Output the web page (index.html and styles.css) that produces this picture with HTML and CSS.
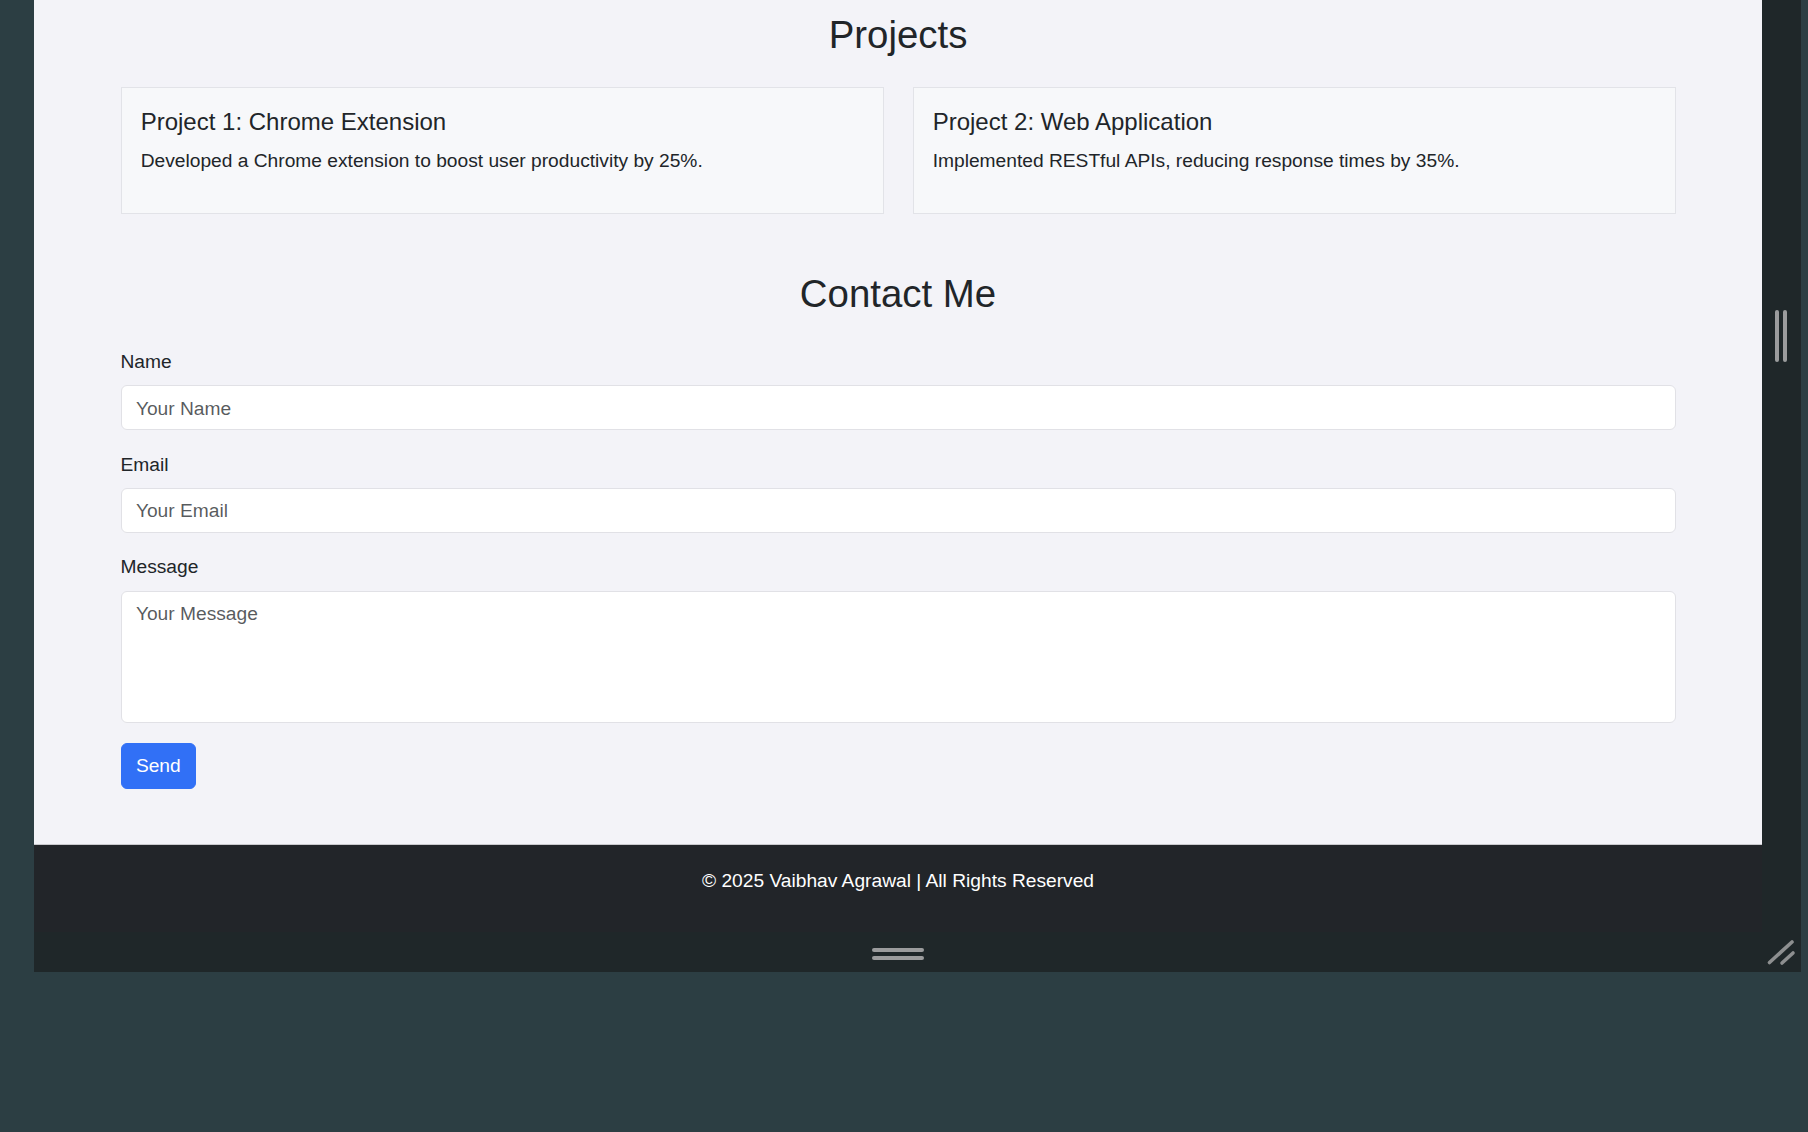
FILE: index.html
```html
<!DOCTYPE html>
<html lang="en">
<head>
<meta charset="utf-8">
<title>Vaibhav Agrawal</title>
<link rel="stylesheet" href="styles.css">
</head>
<body>
<div class="desk">
  <div class="window">
    <div class="viewport">
      <main class="panel">
        <section class="section projects">
          <h2 class="section-title title-projects">Projects</h2>
          <div class="cards">
            <div class="card">
              <h5 class="card-title">Project 1: Chrome Extension</h5>
              <p class="card-text">Developed a Chrome extension to boost user productivity by 25%.</p>
            </div>
            <div class="card">
              <h5 class="card-title">Project 2: Web Application</h5>
              <p class="card-text">Implemented RESTful APIs, reducing response times by 35%.</p>
            </div>
          </div>
        </section>
        <section class="section contact">
          <h2 class="section-title title-contact">Contact Me</h2>
          <form class="form">
            <div class="field">
              <label class="form-label" for="name">Name</label>
              <input class="form-control" id="name" type="text" placeholder="Your Name">
            </div>
            <div class="field">
              <label class="form-label" for="email">Email</label>
              <input class="form-control" id="email" type="email" placeholder="Your Email">
            </div>
            <div class="field">
              <label class="form-label" for="message">Message</label>
              <textarea class="form-control textarea" id="message" rows="4" placeholder="Your Message"></textarea>
            </div>
            <button type="button" class="btn">Send</button>
          </form>
        </section>
      </main>
      <footer class="footer">
        <p class="footer-text">© 2025 Vaibhav Agrawal | All Rights Reserved</p>
      </footer>
    </div>
    <div class="side-bar">
      <div class="v-grip"><span></span><span></span></div>
    </div>
    <div class="bottom-bar">
      <div class="h-grip"><span></span><span></span></div>
    </div>
    <div class="corner">
      <svg width="39" height="40" viewBox="0 0 39 40" aria-hidden="true">
        <line x1="7.5" y1="30.5" x2="30" y2="10" stroke="#8d8f90" stroke-width="3.6" stroke-linecap="round"/>
        <line x1="20" y1="31" x2="31" y2="21" stroke="#8d8f90" stroke-width="3.6" stroke-linecap="round"/>
      </svg>
    </div>
  </div>
</div>
</body>
</html>
```

FILE: styles.css
```css
* {
  box-sizing: border-box;
}

html, body {
  margin: 0;
  padding: 0;
}

body {
  background: #2c3e43;
  font-family: "Liberation Sans", Arial, Helvetica, sans-serif;
  color: #212529;
  width: 1808px;
  height: 1132px;
  overflow: hidden;
}

.desk {
  padding-left: 34px;
}

.window {
  width: 1767px;
  display: grid;
  grid-template-columns: 1728px 39px;
  grid-template-rows: 932px 40px;
  background: #1f2729;
}

.viewport {
  overflow: hidden;
  display: flex;
  flex-direction: column;
}

.panel {
  background: #f3f3f8;
  padding: 12px 86.5px 0;
  height: 845px;
  border-bottom: 1px solid #c9c9cd;
}

.section-title {
  margin: 0;
  font-size: 38.4px;
  line-height: 46px;
  font-weight: 400;
  text-align: center;
  color: #212529;
}

.title-projects {
  margin-bottom: 29px;
}

.title-contact {
  margin-top: 57px;
  margin-bottom: 30px;
}

.cards {
  display: grid;
  grid-template-columns: 1fr 1fr;
  column-gap: 29px;
}

.card {
  background: #f7f8fa;
  border: 1px solid #e2e3e8;
  padding: 20.4px 19.2px 18px;
  height: 127px;
}

.card-title {
  margin: 0 0 9.6px;
  font-size: 24px;
  line-height: 28.8px;
  font-weight: 400;
  color: #212529;
}

.card-text {
  margin: 0;
  font-size: 19.2px;
  line-height: 28.8px;
}

.field {
  display: flex;
  flex-direction: column;
  margin-bottom: 19.2px;
}

.form-label {
  font-size: 19.2px;
  line-height: 28.8px;
  padding-top: 1px;
  margin-bottom: 8.6px;
}

.form-control {
  font-family: "Liberation Sans", Arial, Helvetica, sans-serif;
  font-size: 19.2px;
  line-height: 28.8px;
  padding: 8px 14.4px 6.4px;
  border: 1px solid #e1e1e6;
  border-radius: 6px;
  background: #ffffff;
  color: #212529;
  width: 100%;
  height: 45px;
  margin: 0;
  outline: none;
}

.form-control::placeholder {
  color: rgba(33, 37, 41, 0.75);
  opacity: 1;
}

.textarea {
  height: 132px;
  resize: none;
  display: block;
}

.btn {
  font-family: "Liberation Sans", Arial, Helvetica, sans-serif;
  font-size: 19.2px;
  line-height: 28.8px;
  padding: 7.7px 14.4px 6.7px;
  height: 46px;
  border: 1px solid #3170f6;
  border-radius: 6px;
  background: #3170f6;
  color: #ffffff;
  cursor: pointer;
  margin-top: 1px;
}

.footer {
  background: #222529;
  margin-left: -2px;
  flex: 1;
  padding-top: 21.5px;
}

.footer-text {
  margin: 0;
  text-align: center;
  color: #ffffff;
  font-size: 19.2px;
  line-height: 28.8px;
  padding-left: 2px;
}

.side-bar {
  padding-top: 310px;
  padding-left: 13px;
}

.v-grip {
  display: flex;
  gap: 4px;
}

.v-grip span {
  width: 4px;
  height: 52px;
  border-radius: 2px;
  background: #9b9c9d;
}

.bottom-bar {
  display: flex;
  justify-content: center;
  padding-top: 16px;
}

.h-grip {
  display: flex;
  flex-direction: column;
  gap: 4.5px;
}

.h-grip span {
  width: 52px;
  height: 3.5px;
  border-radius: 2px;
  background: #9b9c9d;
}

.corner {
  display: flex;
}
```
